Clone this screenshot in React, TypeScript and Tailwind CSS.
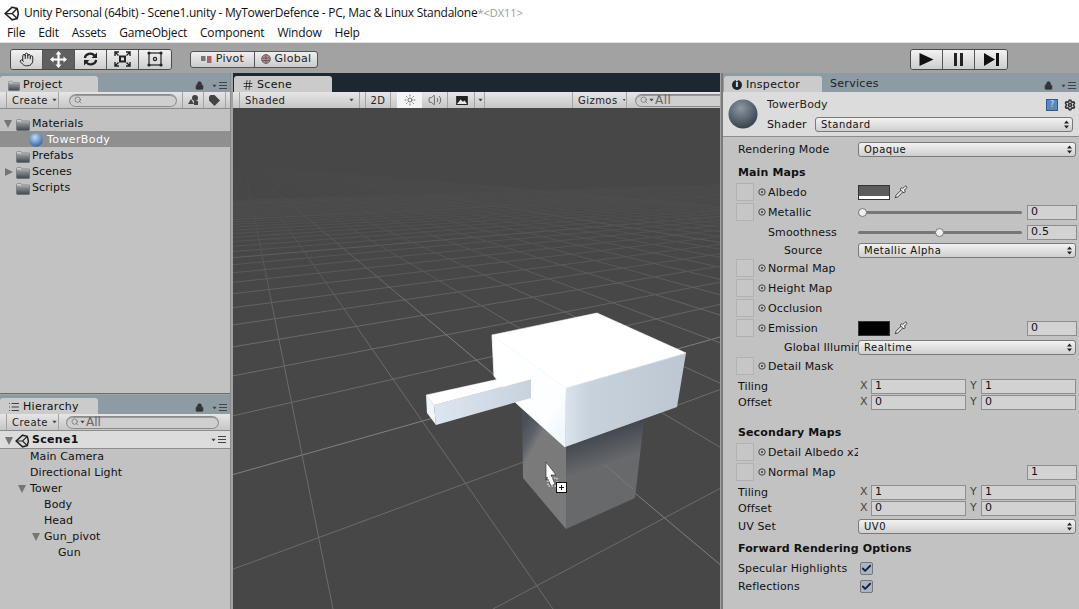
import { ReactNode } from "react";
import { Check, Hand, List, Hash, Lock, Pipette, Search, Settings, Sun, Volume2 } from "lucide-react";

const UI_FONT = "font-['DejaVu_Sans',sans-serif]";

const Caret = ({ className = "" }: { className?: string }) => (
  <svg width="7" height="4" viewBox="0 0 7 4" className={className}>
    <path d="M0.5 0h6L3.5 4z" fill="#444" />
  </svg>
);

const UpDown = () => (
  <svg width="5" height="9" viewBox="0 0 5 9">
    <path d="M2.5 0.5L5 3.5H0zM2.5 8.5L0 5.5H5z" fill="#222" />
  </svg>
);

const PanelMenuLines = () => (
  <div className="flex items-center gap-[1px]">
    <Caret className="scale-75" />
    <div className="flex w-[8px] flex-col gap-[2px]">
      <div className="h-px bg-[#444]" />
      <div className="h-px bg-[#444]" />
      <div className="h-px bg-[#444]" />
    </div>
  </div>
);

const PanelMenu = () => (
  <div className="mb-[2px] flex items-center gap-[7px] text-[#333]">
    <Lock size={9} fill="#333" strokeWidth={2} />
    <PanelMenuLines />
  </div>
);

const FolderIcon = ({ size = 14 }: { size?: number }) => (
  <svg width={size} height={size - 1} viewBox="0 0 14 13">
    <defs>
      <linearGradient id="folderFill" x1="0" y1="0" x2="0" y2="1">
        <stop offset="0" stopColor="#e2e2e2" />
        <stop offset="0.35" stopColor="#8b8f94" />
        <stop offset="1" stopColor="#40474e" />
      </linearGradient>
    </defs>
    <path d="M0.5 2.5q0-1 1-1h3.5l1 1.5h7q.5 0 .5 1v7.5q0 1-1 1h-11q-1 0-1-1z" fill="url(#folderFill)" stroke="#5a5f64" strokeWidth="0.5" />
  </svg>
);

const Sphere = ({ size, id, light, dark }: { size: number; id: string; light: string; dark: string }) => (
  <svg width={size} height={size} viewBox="0 0 30 30">
    <defs>
      <radialGradient id={id} cx="0.42" cy="0.3" r="0.75">
        <stop offset="0" stopColor={light} />
        <stop offset="1" stopColor={dark} />
      </radialGradient>
    </defs>
    <circle cx="15" cy="15" r="14.5" fill={`url(#${id})`} />
  </svg>
);

const UnityLogo = ({ size }: { size: number }) => (
  <svg width={size} height={size} viewBox="0 0 24 24" fill="none" stroke="#222" strokeWidth="2.6" strokeLinejoin="miter">
    <path d="M13 2L21 4L23 12L21 20L13 22L2 12Z" />
    <path d="M2 12H13L21 4M13 12L21 20" strokeWidth="2" />
  </svg>
);

const ToolButton = ({ children, active = false, last = false }: { children: ReactNode; active?: boolean; last?: boolean }) => (
  <div
    className={`flex h-full w-[32px] items-center justify-center ${last ? "" : "border-r border-[#555]"} ${
      active ? "bg-[#606060] text-white" : "bg-gradient-to-b from-[#f2f2f2] to-[#cdcdcd] text-[#222]"
    }`}
  >
    {children}
  </div>
);

const Toolbar = () => (
  <div className="flex h-[30px] shrink-0 items-center bg-[#a2a2a2] pl-[10px] pt-[2px]">
    <div className="flex h-[21px] items-center overflow-hidden rounded-[3px] border border-[#4a4a4a]">
      <ToolButton>
        <Hand size={15} strokeWidth={1.6} />
      </ToolButton>
      <ToolButton active>
        <svg width="17" height="17" viewBox="0 0 17 17" fill="#fff">
          <path d="M8.5 0L11.5 3.5H9.6V7.4H13.5V5.5L17 8.5L13.5 11.5V9.6H9.6V13.5H11.5L8.5 17L5.5 13.5H7.4V9.6H3.5V11.5L0 8.5L3.5 5.5V7.4H7.4V3.5H5.5z" />
        </svg>
      </ToolButton>
      <ToolButton>
        <svg width="15" height="14" viewBox="0 0 15 14" fill="none" stroke="#222" strokeWidth="2.2">
          <path d="M1.8 6A5.5 5 0 0 1 11.5 3.5" />
          <path d="M13.2 8A5.5 5 0 0 1 3.5 10.5" />
          <path d="M14 0.5V6H8.6z" fill="#222" stroke="none" />
          <path d="M1 13.5V8H6.4z" fill="#222" stroke="none" />
        </svg>
      </ToolButton>
      <ToolButton>
        <svg width="17" height="16" viewBox="0 0 17 16" fill="none" stroke="#222" strokeWidth="1.4">
          <rect x="6" y="5.5" width="5" height="5" strokeWidth="2" />
          <path d="M1 5V1H5M1 1L4.5 4.5M16 5V1H12M16 1L12.5 4.5M1 11V15H5M1 15L4.5 11.5M16 11V15H12M16 15L12.5 11.5" />
        </svg>
      </ToolButton>
      <ToolButton last>
        <svg width="16" height="16" viewBox="0 0 16 16" fill="none" stroke="#222" strokeWidth="1.2">
          <rect x="2" y="2" width="12" height="12" />
          <circle cx="8" cy="8" r="1.6" />
          <g fill="#222" stroke="none">
            <circle cx="2" cy="2" r="1.6" />
            <circle cx="14" cy="2" r="1.6" />
            <circle cx="2" cy="14" r="1.6" />
            <circle cx="14" cy="14" r="1.6" />
          </g>
        </svg>
      </ToolButton>
    </div>
    <div className={`ml-[18px] flex h-[17px] items-center overflow-hidden rounded-[3px] border border-[#555] bg-gradient-to-b from-[#f0f0f0] to-[#cbcbcb] text-[11px] tracking-[0.3px] text-[#222] ${UI_FONT}`}>
      <div className="flex h-full w-[64px] items-center justify-center gap-[4px] border-r border-[#555]">
        <svg width="11" height="9" viewBox="0 0 11 9">
          <rect x="0" y="1" width="4.5" height="5" fill="#777" />
          <rect x="6" y="1" width="4.5" height="7" fill="#b4606a" />
        </svg>
        Pivot
      </div>
      <div className="flex h-full w-[62px] items-center justify-center gap-[4px]">
        <svg width="10" height="10" viewBox="0 0 10 10" fill="#b98a90" stroke="#555" strokeWidth="0.8">
          <circle cx="5" cy="5" r="4.4" />
          <path d="M1 4h8M1 6.5h8M5 0.6v8.8" />
        </svg>
        Global
      </div>
    </div>
    <div className="ml-[592px] flex h-[21px] items-center overflow-hidden rounded-[3px] border border-[#4a4a4a]">
      <ToolButton>
        <svg width="15" height="13" viewBox="0 0 15 13"><path d="M0.5 0L14.5 6.5L0.5 13z" fill="#111" /></svg>
      </ToolButton>
      <ToolButton>
        <svg width="9" height="13" viewBox="0 0 9 13" fill="#222"><rect width="3" height="13" /><rect x="6" width="3" height="13" /></svg>
      </ToolButton>
      <ToolButton last>
        <svg width="15" height="13" viewBox="0 0 15 13" fill="#111"><path d="M0 0L11 6.5L0 13z" /><rect x="12" width="3" height="13" /></svg>
      </ToolButton>
    </div>
  </div>
);

const Tab = ({ icon, label, width }: { icon: ReactNode; label: string; width: string }) => (
  <div className={`flex h-[16px] ${width} items-center gap-[3px] rounded-t-[3px] bg-[#cbcbcb] pl-[8px] pt-[2px] text-[11px] tracking-[0.3px] text-[#111]`}>
    {icon}
    {label}
  </div>
);

const SearchBox = ({ width, hint }: { width: string; hint?: string }) => (
  <div className={`flex h-[13px] ${width} items-center rounded-full border border-[#8a8a8a] bg-[#cfcfcf] pl-[4px] text-[12px] text-[#666] shadow-[inset_0_1px_0_#999]`}>
    <Search size={8} strokeWidth={2} />
    {hint && <Caret className="scale-75" />}
    {hint}
  </div>
);

const SubBar = ({ children }: { children: ReactNode }) => (
  <div className="flex h-[16px] shrink-0 items-center bg-gradient-to-b from-[#e6e6e6] to-[#c6c6c6] shadow-[0_1px_0_#8c8c8c]">
    {children}
  </div>
);

const CreateButton = () => (
  <div className="ml-[6px] flex h-full w-[53px] items-center gap-[3px] border-x border-[#a3a3a3] pl-[5px] text-[10px] tracking-[0.45px] text-[#222]">
    Create
    <Caret className="scale-75" />
  </div>
);

const TreeRow = ({
  children,
  indent,
  arrow,
  selected = false,
}: {
  children: ReactNode;
  indent: string;
  arrow?: "down" | "right";
  selected?: boolean;
}) => (
  <div className={`relative flex h-[16px] items-center gap-[2px] pt-[2px] text-[11px] tracking-[0.1px] ${indent} ${selected ? "bg-[#8f8f8f] text-white" : "text-[#111]"}`}>
    {arrow === "down" && <div className="absolute ml-[-12px] h-0 w-0 border-x-[4.5px] border-t-[8px] border-x-transparent border-t-[#757575]" />}
    {arrow === "right" && <div className="absolute ml-[-11px] h-0 w-0 border-y-[4.5px] border-l-[8px] border-y-transparent border-l-[#757575]" />}
    {children}
  </div>
);

const ProjectPanel = () => (
  <div className="flex h-[320px] flex-col bg-[#c2c2c2] shadow-[0_1px_0_#6d6d6d]">
    <div className="flex h-[19px] shrink-0 items-end justify-between bg-[#8d9ba3] pr-[3px]">
      <Tab icon={<FolderIcon size={12} />} label="Project" width="w-[98px]" />
      <PanelMenu />
    </div>
    <SubBar>
      <CreateButton />
      <div className="ml-[10px]"><SearchBox width="w-[108px]" /></div>
      <div className="ml-[5px] flex h-full w-[22px] items-center justify-center border-x border-[#a3a3a3]">
        <svg width="11" height="10" viewBox="0 0 11 10" fill="#444"><circle cx="7" cy="3" r="3" /><path d="M0 9L3 4L6 9z" /><rect x="6" y="6" width="4" height="4" /></svg>
      </div>
      <div className="flex h-full w-[22px] items-center justify-center border-r border-[#a3a3a3]">
        <svg width="11" height="11" viewBox="0 0 11 11"><path d="M0 1.5L1.5 0H5.5L11 5.5L5.5 11L0 5.5z" fill="#444" /></svg>
      </div>
    </SubBar>
    <div className="pt-[7px]">
      <TreeRow indent="pl-[16px]" arrow="down"><FolderIcon />Materials</TreeRow>
      <TreeRow indent="pl-[29px]" selected><Sphere size={14} id="towerSmall" light="#bcdcf8" dark="#2b5f9a" /><span className="ml-[2px] tracking-[0.4px]">TowerBody</span></TreeRow>
      <TreeRow indent="pl-[16px]"><FolderIcon />Prefabs</TreeRow>
      <TreeRow indent="pl-[16px]" arrow="right"><FolderIcon />Scenes</TreeRow>
      <TreeRow indent="pl-[16px]"><FolderIcon />Scripts</TreeRow>
    </div>
  </div>
);

const HierarchyPanel = () => (
  <div className="mt-[2px] flex min-h-0 flex-1 flex-col bg-[#c2c2c2]">
    <div className="flex h-[19px] shrink-0 items-end justify-between bg-[#8d9ba3] pr-[3px]">
      <Tab icon={<List size={12} strokeWidth={1.5} />} label="Hierarchy" width="w-[98px]" />
      <PanelMenu />
    </div>
    <SubBar>
      <CreateButton />
      <div className="ml-[7px]"><SearchBox width="w-[153px]" hint="All" /></div>
    </SubBar>
    <div className="mt-px flex h-[17px] items-center justify-between bg-[#dcdcdc] pr-[4px] shadow-[0_1px_0_#8c8c8c]">
      <div className="flex items-center gap-[2px] pl-[5px] pt-[2px] text-[11px] font-bold tracking-[0.3px] text-[#111]">
        <div className="h-0 w-0 border-x-[4.5px] border-t-[8px] border-x-transparent border-t-[#757575]" />
        <UnityLogo size={14} />
        <span className="ml-[1px]">Scene1</span>
      </div>
      <PanelMenuLines />
    </div>
    <div>
      <TreeRow indent="pl-[30px]">Main Camera</TreeRow>
      <TreeRow indent="pl-[30px]">Directional Light</TreeRow>
      <TreeRow indent="pl-[30px]" arrow="down">Tower</TreeRow>
      <TreeRow indent="pl-[44px]">Body</TreeRow>
      <TreeRow indent="pl-[44px]">Head</TreeRow>
      <TreeRow indent="pl-[44px]" arrow="down">Gun_pivot</TreeRow>
      <TreeRow indent="pl-[58px]">Gun</TreeRow>
    </div>
  </div>
);

// ground grid: each family runs to a vanishing point on the horizon
const HORIZON = 165;
const familyA = Array.from({ length: 36 }, (_, k) => ({ k, x: 494 - 368 * k }));
const familyB = Array.from({ length: 34 }, (_, i) => ({ k: i - 10, x: 334 + 220 * (i - 10) }));

const SceneView = () => (
  <svg viewBox="234 108 487 501" preserveAspectRatio="none" className="block min-h-0 w-full flex-1">
    <defs>
      <linearGradient id="horizonFade" x1="0" y1="0" x2="0" y2="1">
        <stop offset="0" stopColor="#474747" />
        <stop offset="0.25" stopColor="#474747" stopOpacity="0.85" />
        <stop offset="0.6" stopColor="#474747" stopOpacity="0.5" />
        <stop offset="1" stopColor="#474747" stopOpacity="0" />
      </linearGradient>
      <linearGradient id="headLeft" x1="0" y1="0" x2="1" y2="1">
        <stop offset="0" stopColor="#ffffff" />
        <stop offset="0.75" stopColor="#fcfeff" />
        <stop offset="1" stopColor="#eaf3fb" />
      </linearGradient>
      <linearGradient id="headRight" x1="0" y1="0" x2="1" y2="0">
        <stop offset="0" stopColor="#dbe3ec" />
        <stop offset="0.2" stopColor="#c8d2dc" />
        <stop offset="1" stopColor="#bcc7d2" />
      </linearGradient>
      <linearGradient id="gunSide" x1="0" y1="0" x2="1" y2="0">
        <stop offset="0" stopColor="#dde6f0" />
        <stop offset="1" stopColor="#c8d2dc" />
      </linearGradient>
      <linearGradient id="bodyLeft" gradientUnits="userSpaceOnUse" x1="524" y1="425" x2="542" y2="435">
        <stop offset="0" stopColor="#4b5058" />
        <stop offset="0.6" stopColor="#5d6167" />
        <stop offset="1" stopColor="#7a7a7a" />
      </linearGradient>
      <linearGradient id="bodyRight" gradientUnits="userSpaceOnUse" x1="600" y1="433" x2="610" y2="464">
        <stop offset="0" stopColor="#42474f" />
        <stop offset="1" stopColor="#68696b" />
      </linearGradient>
    </defs>
    <rect x="234" y="108" width="487" height="501" fill="#474747" />
    {familyA.map(({ k, x }) => (
      <line key={`a${k}`} x1="1330" y1={HORIZON} x2={x} y2="609" stroke={k % 10 === 2 ? "#808080" : "#6c6c6c"} strokeWidth="1" />
    ))}
    {familyB.map(({ k, x }) => (
      <line key={`b${k}`} x1="245" y1={HORIZON} x2={x} y2="609" stroke={(k + 8) % 10 === 0 ? "#808080" : "#6c6c6c"} strokeWidth="1" />
    ))}
    <rect x="234" y="165" width="487" height="175" fill="url(#horizonFade)" />
    <rect x="234" y="108" width="487" height="58" fill="#474747" />
    <polygon points="523,408 567,447 567,529 524,478" fill="url(#bodyLeft)" />
    <polygon points="567,447 645,420 636,498 567,529" fill="url(#bodyRight)" />
    <line x1="606" y1="465" x2="634" y2="489" stroke="#7a7a7a" />
    <polygon points="493,335 567,388 566,447 517,403 495,376" fill="url(#headLeft)" stroke="#ffffff" strokeWidth="0.8" />
    <polygon points="567,388 687,353 678,407 566,447" fill="url(#headRight)" />
    <polygon points="493,335 598,313 687,353 567,388" fill="#ffffff" stroke="#ffffff" strokeWidth="0.6" />
    <polygon points="435,405 532,379 532,398 437,425" fill="url(#gunSide)" />
    <polygon points="427,395 435,405 437,425 428,413" fill="#f2f6fa" />
    <polygon points="427,395 532,372 532,379 435,405" fill="#ffffff" stroke="#ffffff" strokeWidth="0.4" />
    <polygon points="547,462 557,475 552,475 556,484 552,486 548,477 547,480" fill="#fff" stroke="#222" strokeWidth="0.6" />
    <rect x="549" y="478" width="9" height="8" fill="none" stroke="#fff" strokeDasharray="1.5 1.5" />
    <rect x="557.5" y="482.5" width="10" height="10" fill="#fff" stroke="#111" />
    <path d="M560 487.5h5M562.5 485v5" stroke="#111" />
  </svg>
);

const CenterPanel = () => (
  <div className="ml-[2px] flex w-[487px] flex-col bg-[#c2c2c2]">
    <div className="flex h-[19px] shrink-0 items-end bg-[#1c2830] pl-px">
      <Tab icon={<Hash size={12} strokeWidth={1.4} />} label="Scene" width="w-[98px]" />
    </div>
    <div className="flex h-[16px] shrink-0 items-center bg-gradient-to-b from-[#e6e6e6] to-[#c6c6c6] text-[10px] tracking-[0.45px] text-[#222] shadow-[0_1px_0_#8c8c8c]">
      <div className="ml-[6px] flex h-full w-[121px] items-center justify-between border-x border-[#a3a3a3] pl-[5px] pr-[4px]">
        Shaded
        <Caret className="scale-75" />
      </div>
      <div className="ml-[5px] flex h-full w-[26px] items-center justify-center border-x border-[#a3a3a3]">2D</div>
      <div className="ml-[6px] flex h-full w-[25px] items-center justify-center bg-[#f4f4f4]">
        <Sun size={12} strokeWidth={1.2} />
      </div>
      <div className="flex h-full w-[26px] items-center justify-center border-r border-[#a3a3a3] text-[#555]">
        <Volume2 size={14} strokeWidth={1.4} />
      </div>
      <div className="flex h-full w-[37px] items-center border-r border-[#a3a3a3] pl-[8px]">
        <svg width="12" height="9" viewBox="0 0 13 10"><rect width="13" height="10" fill="#222" /><path d="M1 9L5 4L7.5 6.5L9.5 5L12 9z" fill="#e8e8e8" /></svg>
        <div className="ml-[6px] flex h-full items-center border-l border-[#a3a3a3] pl-[2px]"><Caret className="scale-75" /></div>
      </div>
      <div className="ml-[87px] flex h-full w-[55px] items-center gap-[4px] border-x border-[#a3a3a3] pl-[5px]">
        Gizmos
        <Caret className="scale-75" />
      </div>
      <div className="ml-[8px] flex-1 overflow-hidden">
        <SearchBox width="w-[110px]" hint="All" />
      </div>
    </div>
    <SceneView />
  </div>
);

const Label = ({ children, className = "" }: { children: ReactNode; className?: string }) => (
  <div className={`whitespace-nowrap pt-[2px] text-[11px] tracking-[0.12px] text-[#111] ${className}`}>{children}</div>
);

const Dropdown = ({ value, className = "w-[218px]" }: { value: string; className?: string }) => (
  <div className={`flex h-[15px] shrink-0 items-center justify-between rounded-[3px] border border-[#7a7a7a] bg-gradient-to-b from-[#f2f2f2] to-[#cfcfcf] pl-[5px] pr-[3px] text-[10px] tracking-[0.5px] text-[#111] ${className}`}>
    {value}
    <UpDown />
  </div>
);

const NumberBox = ({ value, className = "" }: { value: string; className?: string }) => (
  <div className={`flex h-[15px] shrink-0 items-center border border-[#8e8e8e] bg-[#d2d2d2] pl-[3px] text-[11px] tracking-[0.3px] text-[#111] ${className}`}>
    {value}
  </div>
);

const Slot = () => <div className="h-[18px] w-[18px] shrink-0 border border-[#b2b2b2] bg-[#c6c6c6]" />;

const Target = () => (
  <svg width="8" height="8" viewBox="0 0 8 8" className="ml-[4px] mr-[2px] shrink-0">
    <circle cx="4" cy="4" r="3.2" fill="none" stroke="#333" strokeWidth="0.9" />
    <circle cx="4" cy="4" r="1" fill="#333" />
  </svg>
);

const MapRow = ({ label, children }: { label: string; children?: ReactNode }) => (
  <div className="flex h-[20px] items-center">
    <Slot />
    <Target />
    <Label className="w-[90px] overflow-hidden">{label}</Label>
    {children}
  </div>
);

const Swatch = ({ color, bar = false }: { color: string; bar?: boolean }) => (
  <div className="flex w-[50px] items-center gap-[4px]">
    <div className="flex h-[15px] w-[32px] shrink-0 flex-col border border-[#333]" style={{ background: color }}>
      {bar && <div className="mt-auto h-[3px] bg-white" />}
    </div>
    <Pipette size={14} strokeWidth={1.4} color="#222" fill="#eee" className="shrink-0" />
  </div>
);

const Slider = ({ percent, value }: { percent: number; value: string }) => (
  <div className="flex items-center">
    <div className="relative h-[3px] w-[164px] rounded-full bg-[#777]">
      <div className="absolute top-[-3px] h-[9px] w-[9px] rounded-full border border-[#777] bg-[#f0f0f0]" style={{ left: `${percent}%` }} />
    </div>
    <NumberBox value={value} className="ml-[5px] w-[50px]" />
  </div>
);

const TransformRow = ({ label, value, className = "" }: { label: string; value: string; className?: string }) => (
  <div className={`flex h-[16px] items-center ${className}`}>
    <Label className="w-[124px] pl-[2px]">{label}</Label>
    <span className="w-[11px] text-[11px] text-[#444]">X</span>
    <NumberBox value={value} className="w-[95px]" />
    <span className="ml-[4px] w-[11px] text-[11px] text-[#444]">Y</span>
    <NumberBox value={value} className="w-[95px]" />
  </div>
);

const Checkbox = () => (
  <div className="ml-[2px] flex h-[13px] w-[13px] items-center justify-center rounded-[2px] border border-[#777] bg-[#a9b4c4]">
    <Check size={11} strokeWidth={4} color="#14233a" />
  </div>
);

const InspectorPanel = () => (
  <div className="ml-[1px] flex min-w-0 flex-1 flex-col border-l-2 border-[#7a7a7a] bg-[#c2c2c2]">
    <div className="flex h-[19px] shrink-0 items-end bg-[#8d9ba3] pr-[3px]">
      <div className="ml-[1px] flex h-[16px] w-[98px] items-center gap-[4px] rounded-t-[3px] bg-[#cbcbcb] pl-[8px] pt-[2px] text-[11px] tracking-[0.3px] text-[#111]">
        <div className="flex h-[10px] w-[10px] items-center justify-center rounded-full bg-[#222] text-[8px] font-bold text-white">i</div>
        Inspector
      </div>
      <div className="ml-[8px] h-[16px] text-[11px] tracking-[0.3px] text-[#222]">Services</div>
      <div className="ml-auto"><PanelMenu /></div>
    </div>
    <div className="flex h-[44px] shrink-0 items-center bg-[#dcdcdc] pl-[5px] pr-[3px] shadow-[0_1px_0_#8c8c8c]">
      <Sphere size={30} id="towerLarge" light="#8d98a6" dark="#333c47" />
      <div className="ml-[9px] flex-1">
        <div className="flex h-[20px] items-center justify-between">
          <Label className="tracking-[0.5px] text-[#222]">TowerBody</Label>
          <div className="flex items-center gap-[6px]">
            <div className="flex h-[12px] w-[12px] items-center justify-center border border-[#2a5c92] bg-[#5c88ba] text-[8px] text-[#cfe0f2]">?</div>
            <Settings size={12} fill="none" color="#333" strokeWidth={3.2} />
          </div>
        </div>
        <div className="flex h-[19px] items-center gap-[6px]">
          <Label className="w-[42px]">Shader</Label>
          <Dropdown value="Standard" className="w-[258px]" />
        </div>
      </div>
    </div>
    <div className="pl-[13px] pt-[4px]">
      <div className="flex h-[18px] items-center">
        <Label className="w-[122px] pl-[2px]">Rendering Mode</Label>
        <Dropdown value="Opaque" />
      </div>
      <Label className="mt-[5px] flex h-[18px] items-center pl-[2px] font-bold">Main Maps</Label>
      <div className="mt-px">
        <MapRow label="Albedo"><Swatch color="#5c5c5c" bar /></MapRow>
        <MapRow label="Metallic"><Slider percent={0} value="0" /></MapRow>
      </div>
      <div className="flex h-[20px] items-center">
        <Label className="w-[122px] pl-[32px]">Smoothness</Label>
        <Slider percent={47} value="0.5" />
      </div>
      <div className="flex h-[16px] items-center">
        <Label className="w-[122px] pl-[48px]">Source</Label>
        <Dropdown value="Metallic Alpha" />
      </div>
      <MapRow label="Normal Map" />
      <MapRow label="Height Map" />
      <MapRow label="Occlusion" />
      <MapRow label="Emission">
        <Swatch color="#000" />
        <NumberBox value="0" className="ml-[119px] w-[50px]" />
      </MapRow>
      <div className="flex h-[18px] items-center">
        <Label className="w-[122px] overflow-hidden pl-[48px]">Global Illumination</Label>
        <Dropdown value="Realtime" />
      </div>
      <MapRow label="Detail Mask" />
      <TransformRow label="Tiling" value="1" className="mt-[2px]" />
      <TransformRow label="Offset" value="0" />
      <Label className="mt-[13px] flex h-[18px] items-center pl-[2px] font-bold">Secondary Maps</Label>
      <div className="mt-px">
        <MapRow label="Detail Albedo x2" />
        <MapRow label="Normal Map">
          <NumberBox value="1" className="ml-[169px] w-[50px]" />
        </MapRow>
      </div>
      <TransformRow label="Tiling" value="1" className="mt-[2px]" />
      <TransformRow label="Offset" value="0" />
      <div className="mt-px flex h-[18px] items-center">
        <Label className="w-[122px] pl-[2px]">UV Set</Label>
        <Dropdown value="UV0" />
      </div>
      <Label className="mt-[4px] flex h-[18px] items-center pl-[2px] font-bold">Forward Rendering Options</Label>
      <div className="mt-[2px] flex h-[18px] items-center">
        <Label className="w-[122px] pl-[2px]">Specular Highlights</Label>
        <Checkbox />
      </div>
      <div className="flex h-[18px] items-center">
        <Label className="w-[122px] pl-[2px]">Reflections</Label>
        <Checkbox />
      </div>
    </div>
  </div>
);

export default function App() {
  return (
    <div className={`flex h-[609px] w-[1079px] flex-col overflow-hidden bg-[#a2a2a2] ${UI_FONT}`}>
      <div className="flex h-[23px] shrink-0 items-center bg-white pl-[4px] pt-[3px] font-['Open_Sans',sans-serif] text-[12px] text-[#111]">
        <UnityLogo size={15} />
        <span className="ml-[5px] whitespace-nowrap tracking-[-0.26px]">Unity Personal (64bit) - Scene1.unity - MyTowerDefence - PC, Mac &amp; Linux Standalone</span>
        <span className="whitespace-nowrap text-[11px] text-[#999]">*&lt;DX11&gt;</span>
      </div>
      <div className="flex h-[20px] shrink-0 items-center gap-[13px] border-b border-[#e2e2e2] bg-white pl-[7px] font-['Open_Sans',sans-serif] text-[12px] tracking-[-0.2px] text-[#111]">
        {["File", "Edit", "Assets", "GameObject", "Component", "Window", "Help"].map((item) => (
          <span key={item}>{item}</span>
        ))}
      </div>
      <Toolbar />
      <div className="flex min-h-0 flex-1">
        <div className="flex w-[231px] shrink-0 flex-col border-r border-[#8a8a8a]">
          <ProjectPanel />
          <HierarchyPanel />
        </div>
        <CenterPanel />
        <InspectorPanel />
      </div>
    </div>
  );
}
